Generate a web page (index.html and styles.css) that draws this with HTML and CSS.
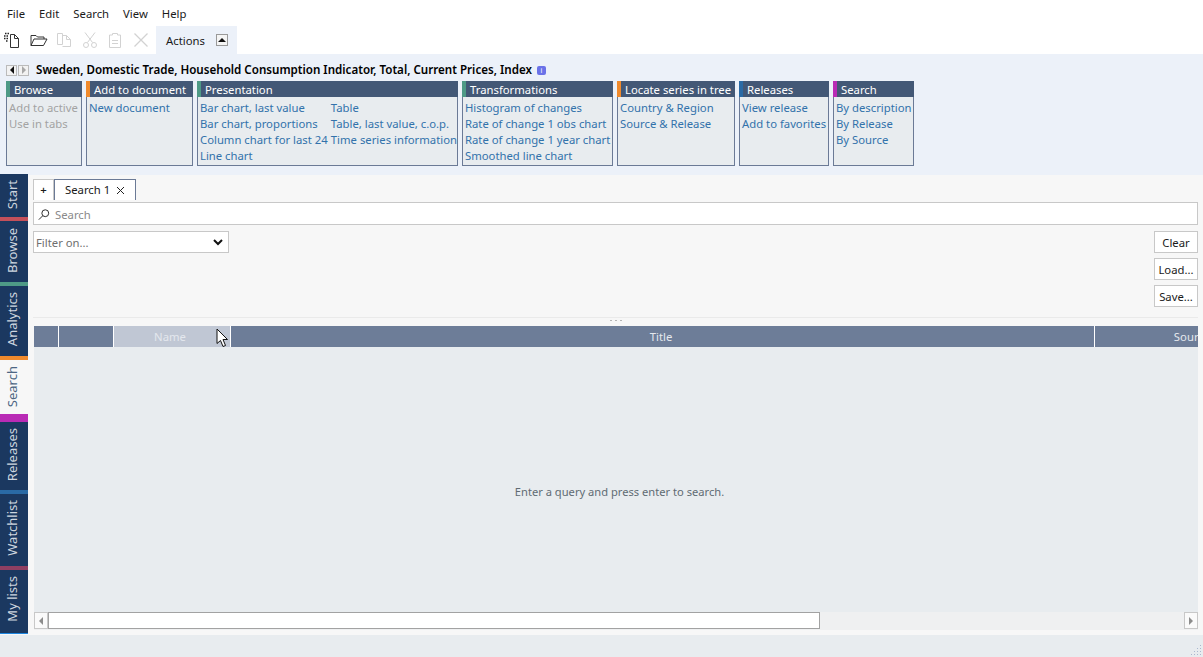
FILE: index.html
```html
<!DOCTYPE html>
<html lang="en">
<head>
    <meta charset="UTF-8">
    <title>Search</title>
    <link rel="stylesheet" href="styles.css">
</head>
<body>
    <nav class="menu-bar">
        <span>File</span>
        <span>Edit</span>
        <span>Search</span>
        <span>View</span>
        <span>Help</span>
    </nav>

    <div class="toolbar">
        <svg class="tool" viewBox="0 0 18 18" fill="none" stroke="#333">
            <path d="M6.500 3.500H10.500L14.500 7.500V16.500H6.500ZM10.500 3.500V7.500H14.500"/>
            <path stroke="#222" stroke-width="1.500" stroke-dasharray="1.500 1" d="M0 5H4M1 2.500H6M0 7.500H4M2 10H4"/>
        </svg>
        <svg class="tool" viewBox="0 0 18 18" fill="none" stroke="#333">
            <path d="M1 14.500V4.500H6L7.500 6H14V8M1 14.500H13.500L17 8H4L1 14.500Z"/>
        </svg>
        <svg class="tool" viewBox="0 0 18 18" fill="none" stroke="#d2d2d2">
            <path d="M2.500 2.500H7.500V13.500H2.500ZM7.500 4.500H11.500L15.500 8.500V15.500H7.500M11.500 4.500V8.500H15.500"/>
        </svg>
        <svg class="tool" viewBox="0 0 18 18" fill="none" stroke="#d2d2d2">
            <path d="M4 1.500L11.500 11.500M14 1.500L6.500 11.500"/>
            <circle cx="5" cy="14" r="2.500"/>
            <circle cx="13" cy="14" r="2.500"/>
        </svg>
        <svg class="tool" viewBox="0 0 18 18" fill="none" stroke="#d2d2d2">
            <path d="M3.500 4H6.500V2.500H11.500V4H14.500V16.500H3.500ZM6 9.500H12M6 12.500H12"/>
        </svg>
        <svg class="tool" viewBox="0 0 18 18" fill="none" stroke="#d2d2d2" stroke-width="1.300">
            <path d="M2.500 2.500L15.500 15.500M15.500 2.500L2.500 15.500"/>
        </svg>
        <div class="actions-tab">
            <span>Actions</span>
            <button class="arrow-btn"><i class="tri-up"></i></button>
        </div>
    </div>

    <section class="actions-panel">
        <div class="series-line">
            <span class="nav-arrows">
                <button class="nav-btn"><i class="tri-left"></i></button>
                <button class="nav-btn nav-btn-off"><i class="tri-right"></i></button>
            </span>
            <strong>Sweden, Domestic Trade, Household Consumption Indicator, Total, Current Prices, Index</strong>
            <span class="info-badge">i</span>
        </div>
        <div class="cards">
            <div class="card card-browse">
                <div class="card-head stripe-green">Browse</div>
                <div class="card-body">
                    <a class="off">Add to active</a>
                    <a class="off">Use in tabs</a>
                </div>
            </div>
            <div class="card card-document">
                <div class="card-head stripe-orange">Add to document</div>
                <div class="card-body">
                    <a>New document</a>
                </div>
            </div>
            <div class="card card-presentation">
                <div class="card-head stripe-green">Presentation</div>
                <div class="card-body two-cols">
                    <div>
                        <a>Bar chart, last value</a>
                        <a>Bar chart, proportions</a>
                        <a>Column chart for last 24</a>
                        <a>Line chart</a>
                    </div>
                    <div>
                        <a>Table</a>
                        <a>Table, last value, c.o.p.</a>
                        <a>Time series information</a>
                    </div>
                </div>
            </div>
            <div class="card card-transform">
                <div class="card-head stripe-green">Transformations</div>
                <div class="card-body">
                    <a>Histogram of changes</a>
                    <a>Rate of change 1 obs chart</a>
                    <a>Rate of change 1 year chart</a>
                    <a>Smoothed line chart</a>
                </div>
            </div>
            <div class="card card-locate">
                <div class="card-head stripe-orange">Locate series in tree</div>
                <div class="card-body">
                    <a>Country &amp; Region</a>
                    <a>Source &amp; Release</a>
                </div>
            </div>
            <div class="card card-releases">
                <div class="card-head stripe-blue">Releases</div>
                <div class="card-body">
                    <a>View release</a>
                    <a>Add to favorites</a>
                </div>
            </div>
            <div class="card card-search">
                <div class="card-head stripe-purple">Search</div>
                <div class="card-body">
                    <a>By description</a>
                    <a>By Release</a>
                    <a>By Source</a>
                </div>
            </div>
        </div>
    </section>

    <main class="workspace">
        <aside class="rail">
            <div class="rail-tab rail-start"><span>Start</span></div>
            <div class="rail-tab rail-browse"><span>Browse</span></div>
            <div class="rail-tab rail-analytics"><span>Analytics</span></div>
            <div class="rail-tab rail-search"><span>Search</span></div>
            <div class="rail-tab rail-releases"><span>Releases</span></div>
            <div class="rail-tab rail-watchlist"><span>Watchlist</span></div>
            <div class="rail-tab rail-lists"><span>My lists</span></div>
        </aside>

        <div class="content">
            <div class="doc-tabs">
                <button class="add-tab">+</button>
                <div class="doc-tab">
                    <span>Search 1</span>
                    <svg class="close-x" viewBox="0 0 9 9" fill="none" stroke="#222"><path d="M1 1L8 8M8 1L1 8"/></svg>
                </div>
            </div>

            <div class="search-box">
                <svg class="search-icon" viewBox="0 0 14 14" fill="none" stroke="#222" stroke-width="1.100">
                    <circle cx="8.500" cy="5.500" r="4"/>
                    <path d="M5.500 8.500L1 13"/>
                </svg>
                <span>Search</span>
            </div>

            <div class="filter-area">
                <div class="filter-select">
                    <span>Filter on...</span>
                    <svg class="chevron" viewBox="0 0 10 7" fill="none" stroke="#111" stroke-width="2"><path d="M1 1L5 5L9 1"/></svg>
                </div>
                <div class="side-buttons">
                    <button>Clear</button>
                    <button>Load...</button>
                    <button>Save...</button>
                </div>
            </div>

            <div class="splitter"><i></i><i></i><i></i></div>

            <div class="grid">
                <div class="grid-head">
                    <div class="col col-a"></div>
                    <div class="col col-b"></div>
                    <div class="col col-name">Name</div>
                    <div class="col col-title">Title</div>
                    <div class="col col-source">Source</div>
                </div>
                <div class="grid-body">Enter a query and press enter to search.</div>
                <div class="scrollbar">
                    <button class="scroll-btn"><i class="tri-left tri-grey"></i></button>
                    <div class="scroll-track"><div class="scroll-thumb"></div></div>
                    <button class="scroll-btn"><i class="tri-right tri-grey"></i></button>
                </div>
            </div>

            <svg class="cursor" viewBox="0 0 14 20" width="14" height="20">
                <path d="M1 1V15.500L4.500 12.500L7 18.500L9.500 17.500L7 11.500H11.500Z" fill="#fff" stroke="#111"/>
            </svg>
        </div>
    </main>

    <footer class="status-bar">
        <svg class="grip" viewBox="0 0 12 12" width="12" height="12" fill="#a9b7cf">
            <rect x="10" y="1" width="1" height="1"/>
            <rect x="10" y="4" width="1" height="1"/><rect x="7" y="4" width="1" height="1"/>
            <rect x="10" y="7" width="1" height="1"/><rect x="7" y="7" width="1" height="1"/><rect x="4" y="7" width="1" height="1"/>
            <rect x="10" y="10" width="1" height="1"/><rect x="7" y="10" width="1" height="1"/><rect x="4" y="10" width="1" height="1"/><rect x="1" y="10" width="1" height="1"/>
        </svg>
    </footer>
</body>
</html>
```

FILE: styles.css
```css
:root {
    --panel: #ecf1f9;
    --card-body: #e8ecef;
    --card-head: #435876;
    --card-border: #6b7a96;
    --link: #3272ab;
    --grid-head: #6d7d98;
    --rail: #1b3860;
    --field-border: #c8c8c8;
}

* {
    margin: 0;
    padding: 0;
    box-sizing: border-box;
    font-family: 'Noto Sans', 'Open Sans', sans-serif;
}

html, body {
    height: 100%;
}

body {
    width: 1203px;
    height: 657px;
    overflow: hidden;
    background: #fff;
    font-size: 11.300px;
    color: #1a1a1a;
    display: flex;
    flex-direction: column;
}

button {
    background: #fff;
    font-size: 11.300px;
    color: #1a1a1a;
}

/* menu + toolbar */
.menu-bar {
    height: 26px;
    display: flex;
    align-items: center;
    gap: 14px;
    padding: 0 0 0 7px;
    flex: none;
}

.toolbar {
    height: 28px;
    display: flex;
    align-items: center;
    padding-left: 4px;
    flex: none;
}

.tool {
    width: 18px;
    height: 18px;
    margin-right: 7.500px;
    flex: none;
}

.actions-tab {
    width: 81px;
    height: 28px;
    margin-left: -1px;
    background: var(--panel);
    display: flex;
    align-items: center;
    gap: 11px;
    padding-left: 10px;
}

.arrow-btn {
    width: 12px;
    height: 12px;
    border: 1px solid #999;
    background: #f4f4f4;
    display: flex;
    align-items: center;
    justify-content: center;
}

.tri-up, .tri-left, .tri-right {
    display: block;
    width: 0;
    height: 0;
    border-style: solid;
    border-color: transparent;
}

.tri-up {
    border-width: 0 4px 4px;
    border-bottom-color: #111;
}

.tri-left {
    border-width: 4px 4px 4px 0;
    border-right-color: #111;
}

.tri-right {
    border-width: 4px 0 4px 4px;
    border-left-color: #111;
}

/* actions panel */
.actions-panel {
    height: 121px;
    background: var(--panel);
    padding: 8px 6px 0;
    flex: none;
}

.series-line {
    height: 16px;
    display: flex;
    align-items: center;
    color: #000;
}

.series-line strong {
    font-size: 11.600px;
    font-weight: 600;
    line-height: 14px;
    white-space: nowrap;
}

.nav-arrows {
    display: flex;
    gap: 1px;
    margin-right: 7px;
}

.nav-btn {
    width: 11px;
    height: 11px;
    border: 1px solid #bbb;
    display: flex;
    align-items: center;
    justify-content: center;
    background: #f2f2f2;
}

.nav-btn-off .tri-right {
    border-left-color: #a8a8a8;
}

.info-badge {
    width: 9px;
    height: 9px;
    margin-left: 5px;
    border-radius: 2px;
    background: #6a72e8;
    color: #fff;
    font-size: 7px;
    line-height: 9px;
    text-align: center;
}

.cards {
    display: flex;
    gap: 4px;
    margin-top: 3px;
}

.card {
    height: 85px;
    border: 1px solid var(--card-border);
    border-top: 0;
    background: var(--card-body);
    flex: none;
}

.card-browse { width: 76px; }
.card-document { width: 107px; }
.card-presentation { width: 261px; }
.card-transform { width: 151px; }
.card-locate { width: 118px; }
.card-releases { width: 90px; }
.card-search { width: 81px; }

.card-head {
    height: 16px;
    margin: 0 -1px;
    background: var(--card-head);
    color: #fff;
    line-height: 17px;
    padding-left: 4px;
    border-left: 4px solid;
    white-space: nowrap;
    overflow: hidden;
}

.stripe-green { border-left-color: #4e9a86; }
.stripe-orange { border-left-color: #f08a2c; }
.stripe-blue { border-left-color: #2a6aa5; }
.stripe-purple { border-left-color: #b92bb5; }

.card-body {
    padding: 2px 0 0 2px;
}

.card-body a {
    display: block;
    height: 16px;
    line-height: 18px;
    color: var(--link);
    white-space: nowrap;
}

.card-body a.off {
    color: #a3a3a3;
}

.two-cols {
    display: flex;
}

.two-cols > div:first-child {
    width: 131px;
}

/* workspace */
.workspace {
    height: 460px;
    display: flex;
    flex: none;
    background: #f7f7f7;
}

.rail {
    width: 28px;
    display: flex;
    flex-direction: column;
    flex: none;
}

.rail-tab {
    background: var(--rail);
    color: #cdd5df;
    font-size: 13px;
    display: flex;
    align-items: flex-start;
    justify-content: center;
    padding: 6px 4px 0 0;
    border-bottom: 4px solid;
}

.rail-tab span {
    writing-mode: vertical-rl;
    transform: rotate(180deg);
    white-space: nowrap;
}

.rail-start { height: 47px; border-bottom-color: #c4505a; margin-top: -1px; }
.rail-browse { height: 65px; border-bottom-color: #4e9a86; padding-top: 7px; }
.rail-analytics { height: 74px; border-bottom-color: #f08a2c; }
.rail-search { height: 62px; border-bottom: 8px solid #b92bb5; background: #f7f7f7; color: #4d6683; }
.rail-releases { height: 72px; border-bottom-color: #2a6aa5; }
.rail-watchlist { height: 76px; border-bottom-color: #8f3f62; }
.rail-lists { height: 64px; border-bottom: 1px solid #1d86e0; }

.content {
    flex: 1;
    min-width: 0;
    padding: 4px 5px 0;
    display: flex;
    flex-direction: column;
    position: relative;
}

.doc-tabs {
    height: 21px;
    display: flex;
    flex: none;
}

.add-tab {
    width: 21px;
    height: 21px;
    border: 1px solid var(--field-border);
    border-bottom: 0;
    line-height: 18px;
    font-weight: 600;
}

.doc-tab {
    width: 82px;
    height: 21px;
    background: #fff;
    border: 1px solid var(--card-border);
    border-bottom: 0;
    display: flex;
    align-items: center;
    padding: 0 0 2px 10px;
    gap: 6px;
}

.close-x {
    width: 9px;
    height: 9px;
    margin-top: 2px;
}

.search-box {
    height: 23px;
    margin-top: 2px;
    background: #fff;
    border: 1px solid var(--field-border);
    display: flex;
    align-items: center;
    gap: 5px;
    padding: 1px 0 0 4px;
    color: #8a8a8a;
    flex: none;
}

.search-icon {
    width: 12px;
    height: 13px;
}

.filter-area {
    height: 76px;
    margin-top: 6px;
    display: flex;
    justify-content: space-between;
    align-items: flex-start;
    flex: none;
}

.filter-select {
    width: 196px;
    height: 22px;
    background: #fff;
    border: 1px solid var(--field-border);
    display: flex;
    align-items: center;
    justify-content: space-between;
    padding: 0 5px 0 2px;
    color: #6f6f6f;
}

.chevron {
    width: 10px;
    height: 7px;
}

.side-buttons {
    display: flex;
    flex-direction: column;
    gap: 5px;
}

.side-buttons button {
    width: 44px;
    height: 22px;
    border: 1px solid var(--field-border);
}

.splitter {
    height: 1px;
    margin-top: 10px;
    background: #eaeaea;
    display: flex;
    justify-content: center;
    gap: 3px;
    flex: none;
}

.splitter i {
    width: 2px;
    height: 1px;
    background: #b5b5b5;
    margin-top: 3px;
}

.grid {
    flex: 1;
    margin: 8px 0 5px 1px;
    display: flex;
    flex-direction: column;
    min-height: 0;
}

.grid-head {
    height: 21px;
    display: flex;
    background: var(--grid-head);
    color: #e4e8ee;
    overflow: hidden;
    flex: none;
}

.col {
    height: 21px;
    line-height: 21px;
    text-align: center;
    border-right: 1px solid #fff;
    flex: none;
}

.col-a { width: 25px; }
.col-b { width: 55px; }
.col-name { width: 117px; background: #c0c7d4; padding-right: 4px; }
.col-title { width: 864px; padding-right: 3px; }
.col-source { width: 194px; border-right: 0; }

.grid-body {
    flex: 1;
    background: var(--card-body);
    color: #5f6b73;
    font-size: 11.150px;
    display: flex;
    align-items: center;
    justify-content: center;
    padding: 24px 0 0 7px;
}

.scrollbar {
    height: 18px;
    background: #eff0f1;
    display: flex;
    flex: none;
}

.scroll-btn {
    width: 14px;
    height: 17px;
    border: 1px solid var(--field-border);
    display: flex;
    align-items: center;
    justify-content: center;
    flex: none;
    background: #fafafa;
}

.tri-grey.tri-left { border-right-color: #8c8c8c; }
.tri-grey.tri-right { border-left-color: #8c8c8c; }

.scroll-track {
    flex: 1;
}

.scroll-thumb {
    width: 772px;
    height: 17px;
    background: #fff;
    border: 1px solid #a2a2a2;
}

.cursor {
    position: absolute;
    left: 188px;
    top: 153px;
}

.status-bar {
    flex: 1;
    background: var(--card-body);
    display: flex;
    justify-content: flex-end;
    align-items: flex-end;
    padding: 0 1px 1px 0;
}
```
